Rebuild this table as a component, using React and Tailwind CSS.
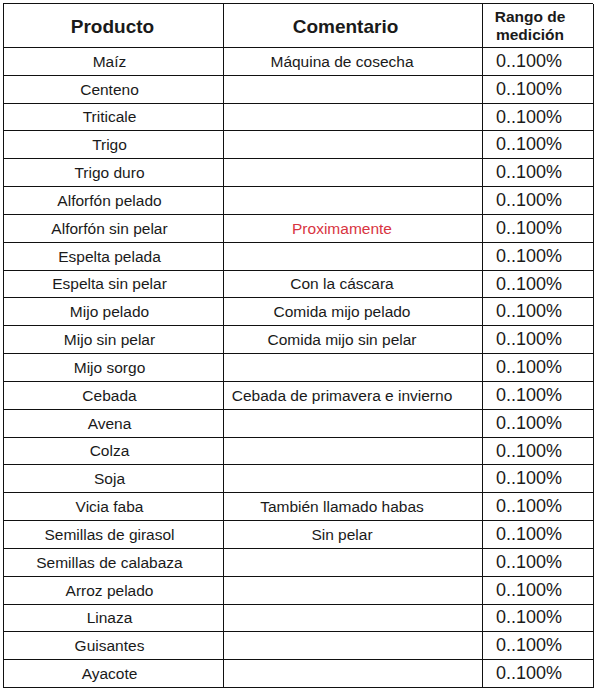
const rows = [
  ["Maíz", "Máquina de cosecha"],
  ["Centeno", ""],
  ["Triticale", ""],
  ["Trigo", ""],
  ["Trigo duro", ""],
  ["Alforfón pelado", ""],
  ["Alforfón sin pelar", "Proximamente", true],
  ["Espelta pelada", ""],
  ["Espelta sin pelar", "Con la cáscara"],
  ["Mijo pelado", "Comida mijo pelado"],
  ["Mijo sin pelar", "Comida mijo sin pelar"],
  ["Mijo sorgo", ""],
  ["Cebada", "Cebada de primavera e invierno"],
  ["Avena", ""],
  ["Colza", ""],
  ["Soja", ""],
  ["Vicia faba", "También llamado habas"],
  ["Semillas de girasol", "Sin pelar"],
  ["Semillas de calabaza", ""],
  ["Arroz pelado", ""],
  ["Linaza", ""],
  ["Guisantes", ""],
  ["Ayacote", ""],
];

const cell = "border-r border-b border-[#111] flex items-center justify-center text-center";

export default function App() {
  return (
    <div className="w-[597px] h-[694px] bg-white pt-[3px] pl-[3px]" style={{ fontFamily: '"Liberation Sans", Arial, sans-serif' }}>
      <div className="grid grid-cols-[220px_259px_111px] grid-rows-[44px_repeat(23,27.83px)] w-[590px] border-l border-t border-[#111] text-[#1a1a1a]">
        <div className={`${cell} text-[19px] font-bold pt-[4px] pr-[2px]`}>Producto</div>
        <div className={`${cell} text-[19px] font-bold pt-[4px] pr-[15px]`}>Comentario</div>
        <div className={`${cell} text-[15.5px] font-bold leading-[18px] pr-[16px]`}>Rango de<br />medición</div>
        {rows.map(([p, c, red]) => [
          <div key={p + "a"} className={`${cell} text-[15.5px] pr-[8px]`}>{p}</div>,
          <div key={p + "b"} className={`${cell} text-[15.5px] pr-[22px] ${red ? "text-[#d8343f]" : ""}`}>{c}</div>,
          <div key={p + "c"} className={`${cell} text-[18px] pr-[18px]`}>0..100%</div>,
        ])}
      </div>
    </div>
  );
}
